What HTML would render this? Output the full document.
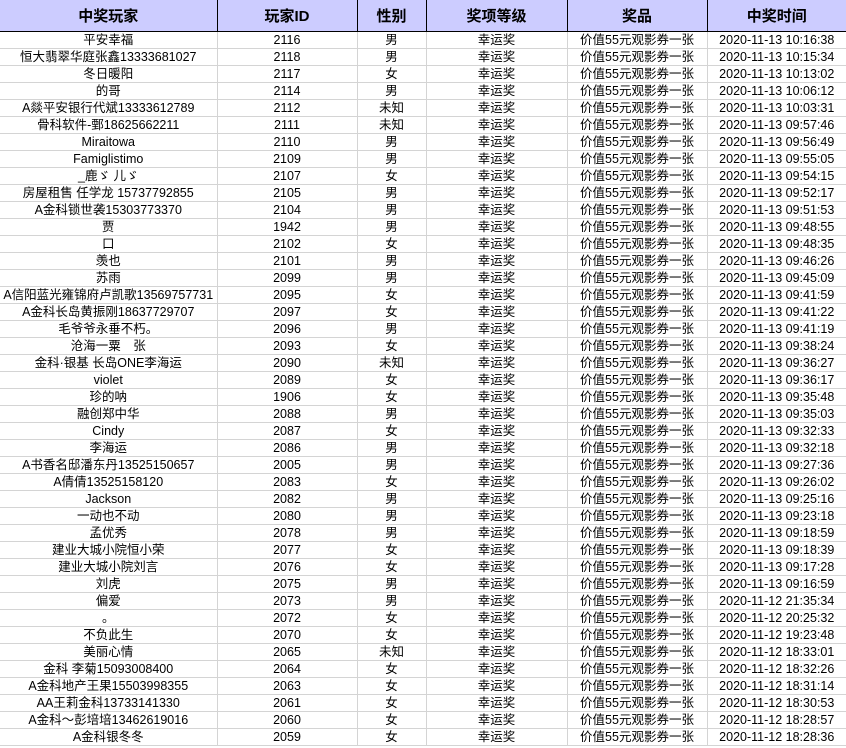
<!DOCTYPE html>
<html><head><meta charset="utf-8"><style>
body{margin:0;width:846px;height:748px;overflow:hidden;background:#fff;font-family:"Liberation Sans","Noto Sans CJK SC",sans-serif;}
table{border-collapse:collapse;table-layout:fixed;position:absolute;left:0;top:0;}
th{background:#ccccff;height:31px;padding:0;border-right:1px solid #000;border-bottom:1px solid #000;font-size:15px;font-weight:bold;color:#000;}
td{height:16px;padding:0;border-right:1px solid #d4d4d4;border-bottom:1px solid #d4d4d4;font-size:12.5px;text-align:center;white-space:nowrap;overflow:hidden;line-height:16px;color:#000;}
th:last-child,td:last-child{border-right:none}
</style></head><body>
<table>
<colgroup><col style="width:217px"><col style="width:140px"><col style="width:69px"><col style="width:141px"><col style="width:140px"><col style="width:139px"></colgroup>
<tr><th>中奖玩家</th><th>玩家ID</th><th>性别</th><th>奖项等级</th><th>奖品</th><th>中奖时间</th></tr>
<tr><td>平安幸福</td><td>2116</td><td>男</td><td>幸运奖</td><td>价值55元观影券一张</td><td>2020-11-13 10:16:38</td></tr>
<tr><td>恒大翡翠华庭张鑫13333681027</td><td>2118</td><td>男</td><td>幸运奖</td><td>价值55元观影券一张</td><td>2020-11-13 10:15:34</td></tr>
<tr><td>冬日暖阳</td><td>2117</td><td>女</td><td>幸运奖</td><td>价值55元观影券一张</td><td>2020-11-13 10:13:02</td></tr>
<tr><td>的哥</td><td>2114</td><td>男</td><td>幸运奖</td><td>价值55元观影券一张</td><td>2020-11-13 10:06:12</td></tr>
<tr><td>A燚平安银行代斌13333612789</td><td>2112</td><td>未知</td><td>幸运奖</td><td>价值55元观影券一张</td><td>2020-11-13 10:03:31</td></tr>
<tr><td>骨科软件-鄄18625662211</td><td>2111</td><td>未知</td><td>幸运奖</td><td>价值55元观影券一张</td><td>2020-11-13 09:57:46</td></tr>
<tr><td>Miraitowa</td><td>2110</td><td>男</td><td>幸运奖</td><td>价值55元观影券一张</td><td>2020-11-13 09:56:49</td></tr>
<tr><td>Famiglistimo</td><td>2109</td><td>男</td><td>幸运奖</td><td>价值55元观影券一张</td><td>2020-11-13 09:55:05</td></tr>
<tr><td>_鹿ゞ 儿ゞ</td><td>2107</td><td>女</td><td>幸运奖</td><td>价值55元观影券一张</td><td>2020-11-13 09:54:15</td></tr>
<tr><td>房屋租售 任学龙 15737792855</td><td>2105</td><td>男</td><td>幸运奖</td><td>价值55元观影券一张</td><td>2020-11-13 09:52:17</td></tr>
<tr><td>A金科锁世袭15303773370</td><td>2104</td><td>男</td><td>幸运奖</td><td>价值55元观影券一张</td><td>2020-11-13 09:51:53</td></tr>
<tr><td>贾</td><td>1942</td><td>男</td><td>幸运奖</td><td>价值55元观影券一张</td><td>2020-11-13 09:48:55</td></tr>
<tr><td>口</td><td>2102</td><td>女</td><td>幸运奖</td><td>价值55元观影券一张</td><td>2020-11-13 09:48:35</td></tr>
<tr><td>羡也</td><td>2101</td><td>男</td><td>幸运奖</td><td>价值55元观影券一张</td><td>2020-11-13 09:46:26</td></tr>
<tr><td>苏雨</td><td>2099</td><td>男</td><td>幸运奖</td><td>价值55元观影券一张</td><td>2020-11-13 09:45:09</td></tr>
<tr><td>A信阳蓝光雍锦府卢凯歌13569757731</td><td>2095</td><td>女</td><td>幸运奖</td><td>价值55元观影券一张</td><td>2020-11-13 09:41:59</td></tr>
<tr><td>A金科长岛黄振刚18637729707</td><td>2097</td><td>女</td><td>幸运奖</td><td>价值55元观影券一张</td><td>2020-11-13 09:41:22</td></tr>
<tr><td>毛爷爷永垂不朽。</td><td>2096</td><td>男</td><td>幸运奖</td><td>价值55元观影券一张</td><td>2020-11-13 09:41:19</td></tr>
<tr><td>沧海一粟　张</td><td>2093</td><td>女</td><td>幸运奖</td><td>价值55元观影券一张</td><td>2020-11-13 09:38:24</td></tr>
<tr><td>金科·银基 长岛ONE李海运</td><td>2090</td><td>未知</td><td>幸运奖</td><td>价值55元观影券一张</td><td>2020-11-13 09:36:27</td></tr>
<tr><td>violet</td><td>2089</td><td>女</td><td>幸运奖</td><td>价值55元观影券一张</td><td>2020-11-13 09:36:17</td></tr>
<tr><td>珍的呐</td><td>1906</td><td>女</td><td>幸运奖</td><td>价值55元观影券一张</td><td>2020-11-13 09:35:48</td></tr>
<tr><td>融创郑中华</td><td>2088</td><td>男</td><td>幸运奖</td><td>价值55元观影券一张</td><td>2020-11-13 09:35:03</td></tr>
<tr><td>Cindy</td><td>2087</td><td>女</td><td>幸运奖</td><td>价值55元观影券一张</td><td>2020-11-13 09:32:33</td></tr>
<tr><td>李海运</td><td>2086</td><td>男</td><td>幸运奖</td><td>价值55元观影券一张</td><td>2020-11-13 09:32:18</td></tr>
<tr><td>A书香名邸潘东丹13525150657</td><td>2005</td><td>男</td><td>幸运奖</td><td>价值55元观影券一张</td><td>2020-11-13 09:27:36</td></tr>
<tr><td>A倩倩13525158120</td><td>2083</td><td>女</td><td>幸运奖</td><td>价值55元观影券一张</td><td>2020-11-13 09:26:02</td></tr>
<tr><td>Jackson</td><td>2082</td><td>男</td><td>幸运奖</td><td>价值55元观影券一张</td><td>2020-11-13 09:25:16</td></tr>
<tr><td>一动也不动</td><td>2080</td><td>男</td><td>幸运奖</td><td>价值55元观影券一张</td><td>2020-11-13 09:23:18</td></tr>
<tr><td>孟优秀</td><td>2078</td><td>男</td><td>幸运奖</td><td>价值55元观影券一张</td><td>2020-11-13 09:18:59</td></tr>
<tr><td>建业大城小院恒小荣</td><td>2077</td><td>女</td><td>幸运奖</td><td>价值55元观影券一张</td><td>2020-11-13 09:18:39</td></tr>
<tr><td>建业大城小院刘言</td><td>2076</td><td>女</td><td>幸运奖</td><td>价值55元观影券一张</td><td>2020-11-13 09:17:28</td></tr>
<tr><td>刘虎</td><td>2075</td><td>男</td><td>幸运奖</td><td>价值55元观影券一张</td><td>2020-11-13 09:16:59</td></tr>
<tr><td>偏爱</td><td>2073</td><td>男</td><td>幸运奖</td><td>价值55元观影券一张</td><td>2020-11-12 21:35:34</td></tr>
<tr><td>。</td><td>2072</td><td>女</td><td>幸运奖</td><td>价值55元观影券一张</td><td>2020-11-12 20:25:32</td></tr>
<tr><td>不负此生</td><td>2070</td><td>女</td><td>幸运奖</td><td>价值55元观影券一张</td><td>2020-11-12 19:23:48</td></tr>
<tr><td>美丽心情</td><td>2065</td><td>未知</td><td>幸运奖</td><td>价值55元观影券一张</td><td>2020-11-12 18:33:01</td></tr>
<tr><td>金科 李菊15093008400</td><td>2064</td><td>女</td><td>幸运奖</td><td>价值55元观影券一张</td><td>2020-11-12 18:32:26</td></tr>
<tr><td>A金科地产王果15503998355</td><td>2063</td><td>女</td><td>幸运奖</td><td>价值55元观影券一张</td><td>2020-11-12 18:31:14</td></tr>
<tr><td>AA王莉金科13733141330</td><td>2061</td><td>女</td><td>幸运奖</td><td>价值55元观影券一张</td><td>2020-11-12 18:30:53</td></tr>
<tr><td>A金科～彭培培13462619016</td><td>2060</td><td>女</td><td>幸运奖</td><td>价值55元观影券一张</td><td>2020-11-12 18:28:57</td></tr>
<tr><td>A金科银冬冬</td><td>2059</td><td>女</td><td>幸运奖</td><td>价值55元观影券一张</td><td>2020-11-12 18:28:36</td></tr>
</table>
</body></html>
